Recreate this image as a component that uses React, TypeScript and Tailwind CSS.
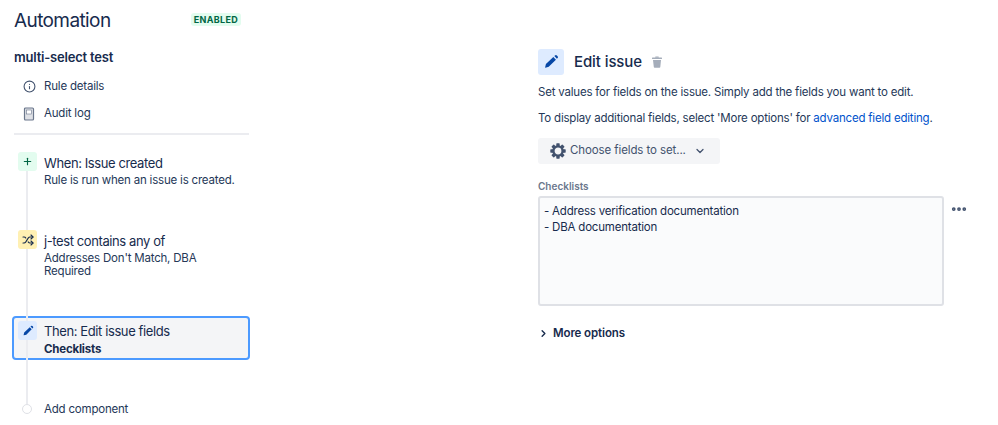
import { Info, Shuffle, ChevronDown, ChevronRight, Plus, Ellipsis } from 'lucide-react';

function PencilGlyph({ size }: { size: number }) {
  return (
    <svg width={size} height={size} viewBox="0 0 24 24" fill="#0747a6">
      <path d="M15.5 4.6l3.9 3.9L8.6 19.3l-4.9 1.2a.4.4 0 0 1-.5-.5l1.2-4.9L15.5 4.6zM17 3.1l1-1a2 2 0 0 1 2.8 0l1.1 1.1a2 2 0 0 1 0 2.8l-1 1L17 3.1z" />
    </svg>
  );
}

function AuditIcon() {
  return (
    <svg width="14" height="14" viewBox="0 0 14 14" fill="none">
      <rect x="2.5" y="1" width="9" height="12" rx="1" fill="#dfe1e6" stroke="#6b778c" strokeWidth="1.2" />
      <rect x="4.5" y="3" width="5" height="4" fill="#fff" stroke="#6b778c" strokeWidth="0.6" />
    </svg>
  );
}

function TrashGlyph() {
  return (
    <svg width="12" height="12" viewBox="0 0 12 12" fill="#a5adba">
      <rect x="1" y="1.5" width="10" height="1.6" rx="0.5" />
      <rect x="4.2" y="0.4" width="3.6" height="1.4" rx="0.5" />
      <path d="M2 4h8l-.7 7a.8.8 0 0 1-.8.7h-4.9a.8.8 0 0 1-.8-.7L2 4z" />
    </svg>
  );
}

function GearGlyph() {
  const angles = [0, 45, 90, 135, 180, 225, 270, 315];
  return (
    <svg width="16" height="16" viewBox="0 0 16 16" fill="#42526e">
      {angles.map((a) => (
        <rect key={a} x="6.3" y="0.3" width="3.4" height="3.4" rx="0.6" transform={`rotate(${a} 8 8)`} />
      ))}
      <circle cx="8" cy="8" r="4.6" fill="none" stroke="#42526e" strokeWidth="2.4" />
    </svg>
  );
}

export default function App() {
  return (
    <div className="flex h-[425px] w-[998px] overflow-hidden bg-white font-['Inter',sans-serif] text-[#172b4d]">
      <aside className="ml-[14px] w-[235px] shrink-0">
        <div className="flex h-[42px] items-center justify-between pr-2">
          <h1 className="text-[19px] leading-6 tracking-[-0.6px] text-[#172b4d]">Automation</h1>
          <span className="-mt-[3px] rounded-[3px] bg-[#e3fcef] px-[3px] py-[1px] text-[9px] leading-[11px] font-bold tracking-[0.3px] text-[#006644]">
            ENABLED
          </span>
        </div>
        <h2 className="mt-[6px] text-[13px] leading-[18px] font-semibold tracking-[-0.2px]">multi-select test</h2>
        <div className="mt-[7px] flex h-[27px] items-center text-[11.5px] tracking-[-0.2px] text-[#253858]">
          <span className="flex w-[30px] justify-center">
            <Info size={13} color="#42526e" />
          </span>
          <span>Rule details</span>
        </div>
        <div className="flex h-[27px] items-center text-[11.5px] tracking-[-0.2px] text-[#253858]">
          <span className="flex w-[30px] justify-center">
            <AuditIcon />
          </span>
          <span>Audit log</span>
        </div>
        <div className="mt-[6px] h-[2px] bg-[#ebecf0]" />

        <div className="relative mt-[17px]">
          <div className="absolute top-[16px] left-[12px] h-[236px] w-[2px] bg-[#ebecf0]" />

          <div className="relative flex h-[78px] pl-[4px]">
            <span className="flex h-[19px] w-[19px] items-center justify-center rounded-[3px] bg-[#e3fcef]">
              <Plus size={11} strokeWidth={2.5} color="#006644" />
            </span>
            <div className="ml-[7px] pt-[2px]">
              <div className="text-[13px] leading-[18px] tracking-[-0.4px]">When: Issue created</div>
              <div className="text-[11.5px] leading-[16px] tracking-[-0.2px] text-[#253858]">Rule is run when an issue is created.</div>
            </div>
          </div>

          <div className="relative flex h-[86px] pl-[4px]">
            <span className="flex h-[19px] w-[19px] items-center justify-center rounded-[3px] bg-[#fff0b3]">
              <Shuffle size={12} strokeWidth={2.2} color="#172b4d" />
            </span>
            <div className="ml-[7px] w-[190px] pt-[2px]">
              <div className="text-[13px] leading-[18px] tracking-[-0.4px]">j-test contains any of</div>
              <div className="mt-[2px] text-[11.5px] leading-[13px] tracking-[-0.2px] text-[#253858]">Addresses Don't Match, DBA Required</div>
            </div>
          </div>

          <div className="-ml-[2px] flex h-[44px] w-[238px] rounded-[4px] border-2 border-[#4c9aff] bg-[#f4f5f7] pt-[3px] pl-[4px]">
            <span className="relative flex h-[19px] w-[19px] items-center justify-center rounded-[3px] bg-[#deebff]">
              <PencilGlyph size={12} />
            </span>
            <div className="relative ml-[7px] pt-[1px]">
              <div className="text-[13px] leading-[18px] tracking-[-0.4px]">Then: Edit issue fields</div>
              <div className="mt-[1px] text-[11.5px] leading-[16px] font-bold tracking-[-0.2px]">Checklists</div>
            </div>
          </div>

          <div className="relative mt-[40px] flex h-[18px] items-center pl-[4px] text-[11.5px] tracking-[-0.2px] text-[#253858]">
            <span className="ml-[4px] h-[10px] w-[10px] rounded-full border border-[#dfe1e6] bg-white" />
            <span className="mt-[2px] ml-[12px]">Add component</span>
          </div>
        </div>
      </aside>

      <main className="ml-[289px] w-[450px] shrink-0 pt-[49px]">
        <div className="flex items-center">
          <span className="flex h-[26px] w-[26px] items-center justify-center rounded-[3px] bg-[#deebff]">
            <PencilGlyph size={16} />
          </span>
          <h2 className="ml-[10px] text-[15px] leading-6 font-medium tracking-[-0.1px]">Edit issue</h2>
          <span className="ml-[9px]">
            <TrashGlyph />
          </span>
        </div>
        <p className="mt-[9px] text-[11.5px] leading-[16px] tracking-[-0.2px] text-[#253858]">
          Set values for fields on the issue. Simply add the fields you want to edit.
        </p>
        <p className="mt-[10px] text-[11.5px] leading-[16px] tracking-[-0.2px] text-[#253858]">
          To display additional fields, select 'More options' for <span className="text-[#0052cc]">advanced field editing</span>.
        </p>
        <button className="mt-[12px] flex h-[26px] w-[182px] items-center rounded-[3px] bg-[#f4f5f7] pl-[12px] text-[11.5px] tracking-[-0.1px] text-[#42526e]">
          <GearGlyph />
          <span className="ml-[4px]">Choose fields to set...</span>
          <ChevronDown size={12} strokeWidth={2.5} className="ml-[8px]" />
        </button>
        <div className="mt-[16px] text-[10px] leading-[12px] font-semibold text-[#6b778c]">Checklists</div>
        <div className="relative mt-[4px]">
          <div className="h-[110px] w-[406px] rounded-[3px] border-2 border-[#dfe1e6] bg-[#fafbfc] px-[4px] py-[5px] text-[11.5px] leading-[16px] tracking-[-0.2px] text-[#172b4d]">
            <div>- Address verification documentation</div>
            <div>- DBA documentation</div>
          </div>
          <Ellipsis size={18} strokeWidth={3} color="#42526e" className="absolute top-[4px] left-[412px]" />
        </div>
        <div className="mt-[19px] flex items-center text-[11.5px] leading-[16px] font-semibold tracking-[-0.1px] text-[#172b4d]">
          <ChevronRight size={11} strokeWidth={3} />
          <span className="ml-[4px]">More options</span>
        </div>
      </main>
    </div>
  );
}
